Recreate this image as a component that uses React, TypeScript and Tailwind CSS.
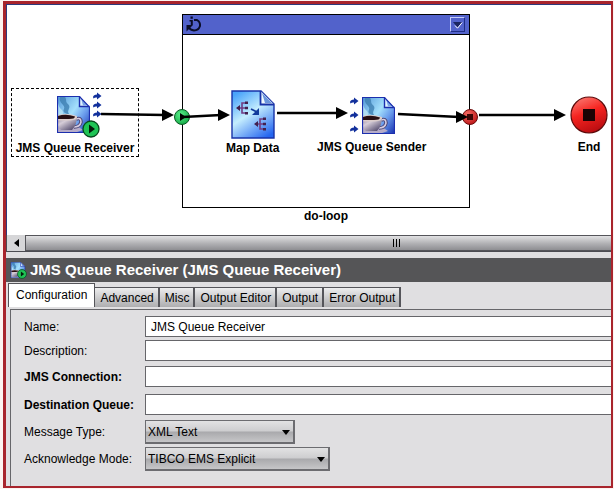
import React, { ReactNode } from 'react';

interface NodeProps {
  label: string;
  className: string;
  children: ReactNode;
}

// Activity on the process canvas: icon on top, bold label below
function ActivityNode({ label, className, children }: NodeProps) {
  return (
    <div className={`absolute flex flex-col items-center ${className}`}>
      {children}
      <span className="text-xs font-bold whitespace-nowrap">{label}</span>
    </div>
  );
}

function CupDocument({ id, className }: { id: string; className: string }) {
  return (
    <svg viewBox="0 0 33 37" className={className} aria-hidden="true">
      <defs>
        <linearGradient id={`${id}-sky`} x1="0" y1="0.1" x2="1" y2="0.9">
          <stop offset="0" stopColor="#5c9fdc" />
          <stop offset="0.45" stopColor="#a4e0fc" />
          <stop offset="0.7" stopColor="#6a9cec" />
          <stop offset="1" stopColor="#2340b8" />
        </linearGradient>
        <linearGradient id={`${id}-cup`} x1="0" y1="0" x2="0.8" y2="1">
          <stop offset="0" stopColor="#8d8098" />
          <stop offset="0.4" stopColor="#d6cdd8" />
          <stop offset="1" stopColor="#50486c" />
        </linearGradient>
      </defs>
      <path d="M0.5 0.5H22.5L32.5 11V36.5H0.5Z" fill={`url(#${id}-sky)`} />
      <path d="M3 1C1 7 9 9 7 13C5 16 9 18 12 18C9 14 15 12 11 8C8 6 10 3 8 1Z" fill="#3f7fb2" opacity="0.8" />
      <path d="M1 7Q2 12 5 14Q7 17 5 19H1Z" fill="#c4ecf8" opacity="0.7" />
      <path d="M1 30H20L26 34L20 36H1Z" fill="#b6acc8" />
      <path d="M19 23Q24 21 24 26Q23 31 17 31" fill="none" stroke="#4a4474" strokeWidth="3.600" />
      <path d="M19 23Q24 21 24 26Q23 31 17 31" fill="none" stroke="#d4cde2" strokeWidth="1.600" />
      <path d="M1 20H20Q20 29 15 34H4Q1 32 1 29Z" fill={`url(#${id}-cup)`} />
      <path d="M1 19Q10 16.500 20 20Q21 24 13 24.500H1Z" fill="#dccdcb" />
      <path d="M1 20Q9 17.500 18 20.500Q18 23 12 23H1Z" fill="#271014" />
      <path d="M22.5 0.5V10.5H32.5" fill="#dff3ff" stroke="#1c2fae" strokeWidth="1.4" />
      <path d="M24 2L31.500 9.500H26Z" fill="#7ba4e4" />
      <path d="M0.5 0.5H22.5L32.5 11V36.5H0.5Z" fill="none" stroke="#1c2fae" strokeWidth="1.2" />
    </svg>
  );
}

// Three small arrows; the receiver and the sender space them differently
function MessageArrows({ step }: { step: number }) {
  return (
    <svg width="9" height={step * 2 + 8} className="shrink-0" aria-hidden="true">
      {[0, 1, 2].map((i) => (
        <g key={i} transform={`translate(0 ${i * step})`}>
          <path d="M0 5Q0.500 2.500 4 2.500V0.500L8.500 4L4 7.500V5.500Q2 5 0.500 6.500Z" fill="#12309c" />
        </g>
      ))}
    </svg>
  );
}

function MapDocument() {
  return (
    <svg width="44" height="49" viewBox="0 0 44 49" aria-hidden="true">
      <defs>
        <linearGradient id="map-sky" x1="0.2" y1="0" x2="0.8" y2="1">
          <stop offset="0" stopColor="#4aa4fa" />
          <stop offset="0.45" stopColor="#c4edfe" />
          <stop offset="1" stopColor="#2566f0" />
        </linearGradient>
      </defs>
      <path d="M1 1H30L43 14V48H1Z" fill="url(#map-sky)" stroke="#1833a8" strokeWidth="1.400" />
      <path d="M29.500 1V14.500H43" fill="#f1faff" stroke="#1833a8" strokeWidth="1.800" />
      <path d="M31 3L41 13H34Z" fill="#6b96dc" />
      {[
        [5, 11],
        [23, 27],
      ].map(([x, y]) => (
        <g key={x} transform={`translate(${x} ${y})`} stroke="#713c82" strokeWidth="1.600" fill="none">
          <path d="M10 2H6V12H10M2 7H10" />
          <path d="M0 7L4 4V10ZM9 0.500H12V3H9ZM9 5.800H12V8.200H9ZM9 11H12V13.500H9Z" fill="#42204e" stroke="none" />
        </g>
      ))}
      <path d="M20 19L26 22" stroke="#123a9c" strokeWidth="1.800" />
      <path d="M28 18V25H21Z" fill="#123a9c" />
    </svg>
  );
}

function StartBadge({ className }: { className: string }) {
  return (
    <svg viewBox="0 0 18 18" className={className} aria-hidden="true">
      <circle cx="9" cy="9" r="8" fill="#1fc455" stroke="#07491d" strokeWidth="1.300" />
      <path d="M7 4.500L13 9L7 13.500Z" fill="#031c0a" />
    </svg>
  );
}

interface LinkProps {
  x1: number;
  y1: number;
  x2: number;
  y2: number;
}

const TRANSITIONS: LinkProps[] = [
  { x1: 94, y1: 109, x2: 166, y2: 110 },
  { x1: 176, y1: 112, x2: 222, y2: 110 },
  { x1: 270, y1: 108, x2: 340, y2: 108 },
  { x1: 391, y1: 109, x2: 460, y2: 112 },
  { x1: 472, y1: 110, x2: 558, y2: 110 },
];

function Transitions() {
  return (
    <svg className="absolute inset-0 h-full w-full" aria-hidden="true">
      <defs>
        <radialGradient id="in-port" cx="0.4" cy="0.35" r="0.7">
          <stop offset="0" stopColor="#5cf08c" />
          <stop offset="1" stopColor="#12a844" />
        </radialGradient>
        <radialGradient id="out-port" cx="0.35" cy="0.3" r="0.8">
          <stop offset="0" stopColor="#f56a62" />
          <stop offset="1" stopColor="#b90f12" />
        </radialGradient>
      </defs>
      <circle cx="175" cy="112" r="7.500" fill="url(#in-port)" stroke="#0b5a24" />
      <path d="M173 108L179 112L173 116Z" />
      <circle cx="463" cy="112" r="7.500" fill="url(#out-port)" stroke="#6b0c0c" />
      <rect x="460" y="109" width="6" height="6" fill="#3c0606" />
      {TRANSITIONS.map(({ x1, y1, x2, y2 }) => (
        <g key={x1}>
          <line x1={x1} y1={y1} x2={x2 - 8} y2={y2} stroke="#000" strokeWidth="2.400" />
          <path d={`M${x2 - 11} ${y2 - 6}L${x2 + 1} ${y2}L${x2 - 11} ${y2 + 6}Z`} />
        </g>
      ))}
    </svg>
  );
}

function ProcessCanvas() {
  return (
    <section className="relative h-[231px] overflow-hidden border-t border-l border-[#2d3a7c] bg-white">
      <div className="absolute top-[9px] left-[175px] h-[194px] w-72 border border-black">
        <div className="flex h-5 items-center justify-between border-b border-black bg-[#5262cb] pr-1 pl-[3px]">
          <svg width="16" height="17" viewBox="0 0 16 17" aria-hidden="true">
            <path d="M8 4H11Q14.500 6 14 10Q12.500 14.500 8 14.500Q4 14 2.500 11" fill="none" stroke="#0a0d28" strokeWidth="2" />
            <path d="M0.500 9H7L0.500 15.500Z" fill="#0a0d28" />
            <path d="M4.500 0.500H6.800V2.800H4.500ZM3.500 4H6.800V9H4.800V5.600H3.500Z" fill="#0a0d28" />
          </svg>
          <button
            type="button"
            aria-label="Collapse group"
            className="flex h-[15px] w-[15px] items-center justify-center border border-[#1e2c85] border-t-[#c4ccf8] border-l-[#c4ccf8]"
          >
            <svg width="11" height="8" viewBox="0 0 11 8" className="shrink-0" aria-hidden="true">
              <path d="M1 1H10L5.500 6.500Z" fill="#1b2560" />
              <path d="M3 4.500L5.500 7.200L10.200 1.500" fill="none" stroke="#fff" />
            </svg>
          </button>
        </div>
      </div>
      <span className="absolute top-[203px] left-[297px] text-xs font-bold">do-loop</span>

      <Transitions />

      <ActivityNode
        label="JMS Queue Receiver"
        className="top-[83px] left-1 h-[69px] w-32 gap-1.5 border border-dashed border-black pt-[3px]"
      >
        <div className="relative flex h-[42px] items-start pl-2">
          <CupDocument id="receiver" className="mt-1 mr-[3px] h-[37px] w-[33px]" />
          <MessageArrows step={9} />
          <StartBadge className="absolute right-0.5 -bottom-1 h-[18px] w-[18px]" />
        </div>
      </ActivityNode>

      <ActivityNode label="Map Data" className="top-[85px] left-[219px] gap-px">
        <MapDocument />
      </ActivityNode>

      <ActivityNode label="JMS Queue Sender" className="top-[92px] left-[310px] gap-[5px]">
        <div className="flex items-start gap-[3px] pl-0.5">
          <MessageArrows step={14} />
          <CupDocument id="sender" className="h-[37px] w-[33px]" />
        </div>
      </ActivityNode>

      <ActivityNode label="End" className="top-[91px] left-[563px] gap-[5px]">
        <svg width="38" height="38" viewBox="0 0 38 38" aria-hidden="true">
          <defs>
            <linearGradient id="end-ball" x1="0.2" y1="0" x2="0.6" y2="1">
              <stop offset="0" stopColor="#fb7a72" />
              <stop offset="0.45" stopColor="#f52420" />
              <stop offset="1" stopColor="#b80c10" />
            </linearGradient>
          </defs>
          <circle cx="19" cy="19" r="18" fill="url(#end-ball)" stroke="#5c0b0b" strokeWidth="1.200" />
          <rect x="13" y="13" width="12" height="12" fill="#1c0304" />
        </svg>
      </ActivityNode>
    </section>
  );
}

function ScrollBar() {
  return (
    <div className="flex h-[17px] border-b border-l border-[#4c4c52] bg-[#d6d6d8]">
      <button type="button" aria-label="Scroll left" className="flex w-[18px] items-center justify-center">
        <svg width="5" height="8" aria-hidden="true">
          <path d="M5 0V8L0 4Z" />
        </svg>
      </button>
      <div className="flex flex-1 items-center justify-center border border-r-0 border-[#55555a] bg-linear-to-b from-[#e2e2e4] via-[#b4b4b7] to-[#8e8e92] pl-[156px]">
        <div className="flex gap-0.5">
          <i className="h-2 w-px bg-black" />
          <i className="h-2 w-px bg-black" />
          <i className="h-2 w-px bg-black" />
        </div>
      </div>
    </div>
  );
}

const TABS = ['Configuration', 'Advanced', 'Misc', 'Output Editor', 'Output', 'Error Output'];

function TabBar() {
  return (
    <div role="tablist" className="flex items-end pt-px pl-0.5">
      {TABS.map((tab, i) => (
        <button
          key={tab}
          type="button"
          role="tab"
          aria-selected={i === 0}
          className={
            i === 0
              ? 'h-6 border border-b-0 border-[#55555a] bg-white px-[7px] pb-0.5 whitespace-nowrap'
              : 'h-5 border-t border-r-2 border-[#55555a] bg-linear-to-b from-[#ededee] to-[#aeaeb0] pr-1 pl-[5px] whitespace-nowrap'
          }
        >
          {tab}
        </button>
      ))}
    </div>
  );
}

interface FieldProps {
  id: string;
  label: string;
  value?: string;
  required?: boolean;
}

function TextField({ id, label, value = '', required = false }: FieldProps) {
  return (
    <div className={required ? 'flex items-center py-0.5' : 'flex items-center'}>
      <label htmlFor={id} className={required ? 'w-[121px] shrink-0 font-bold' : 'w-[121px] shrink-0'}>
        {label}
      </label>
      <input
        id={id}
        type="text"
        defaultValue={value}
        className="h-[21px] min-w-0 flex-1 border border-r-0 border-[#66666a] bg-white px-[5px]"
      />
    </div>
  );
}

interface SelectProps {
  id: string;
  label: string;
  value: string;
  width: string;
}

function SelectField({ id, label, value, width }: SelectProps) {
  return (
    <div className="flex items-center">
      <label htmlFor={id} className="w-[121px] shrink-0">
        {label}
      </label>
      <div className={`relative ${width}`}>
        <select
          id={id}
          className="block h-6 w-full appearance-none border border-r-2 border-b-2 border-[#6c6c70] bg-[linear-gradient(#e2e2e3,#cdcdcf_48%,#a9a9ac_52%,#c6c6c8)] px-0.5"
        >
          <option>{value}</option>
        </select>
        <svg width="8" height="5" className="pointer-events-none absolute top-[10px] right-[5px]" aria-hidden="true">
          <path d="M0 0H8L4 5Z" />
        </svg>
      </div>
    </div>
  );
}

function App() {
  return (
    <div className="bg-[#fdf3f0] pt-px pr-px pb-px pl-[3px] font-['Liberation_Sans',Arial,sans-serif] text-xs text-black">
      <main className="border-t-3 border-r-2 border-b-2 border-l-3 border-[#a8242c] bg-[#e0dfe1]">
        <ProcessCanvas />
        <ScrollBar />

        <h1 className="mt-1.5 flex h-6 items-center gap-[3px] bg-[#555557] pl-1 text-[15px] font-bold whitespace-nowrap text-white">
          <span className="relative h-[17px] w-[17px]">
            <CupDocument id="title" className="h-4 w-4" />
            <StartBadge className="absolute right-0 bottom-0 h-2.5 w-2.5" />
          </span>
          JMS Queue Receiver (JMS Queue Receiver)
        </h1>

        <TabBar />

        <form className="mt-0.5 ml-1 flex flex-col gap-[3px] border-t border-l border-[#66666a] pt-1.5 pb-[15px] pl-[13px]">
          <TextField id="name" label="Name:" value="JMS Queue Receiver" />
          <TextField id="description" label="Description:" />
          <TextField id="connection" label="JMS Connection:" required />
          <TextField id="destination" label="Destination Queue:" required />
          <SelectField id="message-type" label="Message Type:" value="XML Text" width="w-[150px]" />
          <SelectField id="ack-mode" label="Acknowledge Mode:" value="TIBCO EMS Explicit" width="w-[185px]" />
        </form>
      </main>
    </div>
  );
}

export default App;
